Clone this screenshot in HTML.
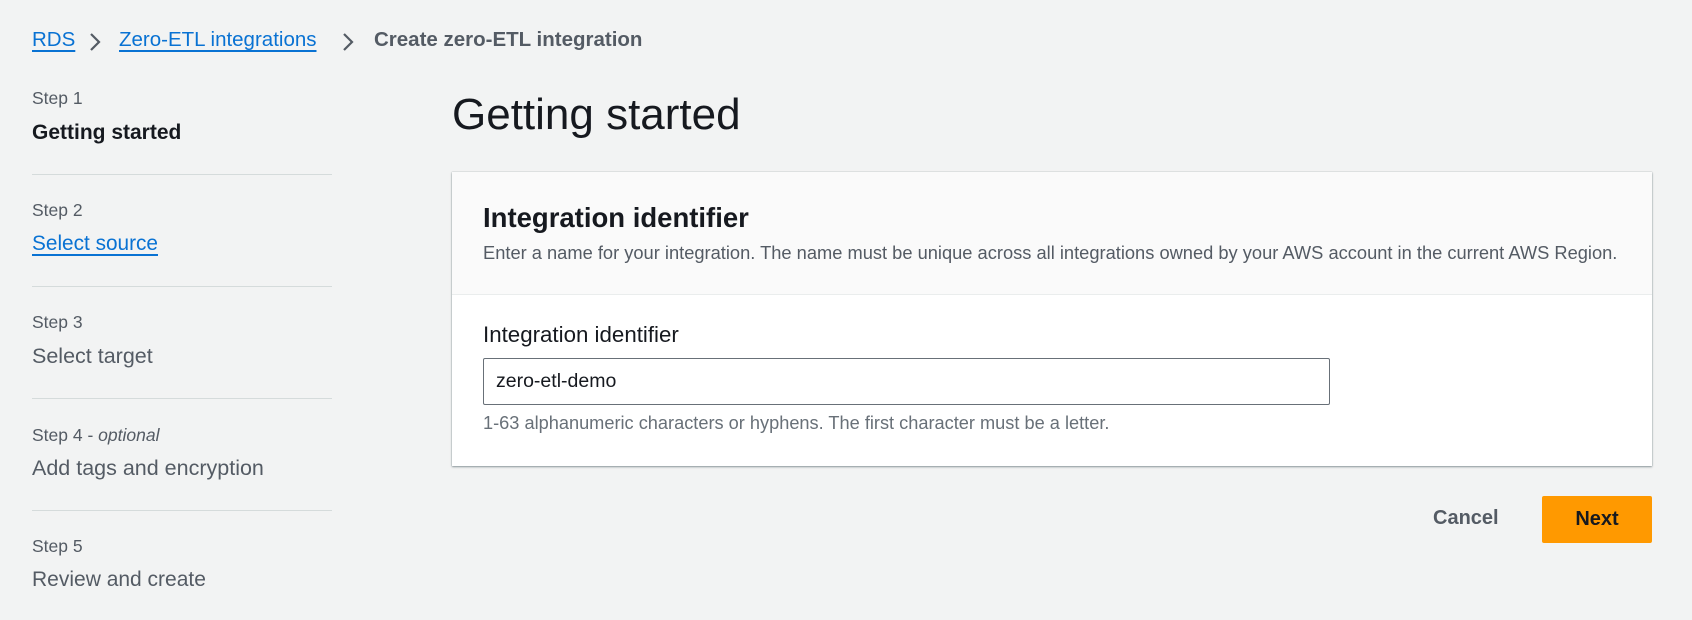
<!DOCTYPE html>
<html><head><meta charset="utf-8"><style>
*{margin:0;padding:0;box-sizing:border-box}
body{width:1692px;height:620px;background:#f2f3f3;font-family:"Liberation Sans",sans-serif;position:relative;overflow:hidden;color:#16191f}
.a{position:absolute;white-space:nowrap}
.bc{font-size:20.5px;top:28px}
.stp{font-size:17.5px;color:#545b64;left:32px}
.nav{font-size:21.5px;color:#545b64;left:32px}
.lnk{color:#0972d3 !important;text-decoration:underline;text-underline-offset:4px;text-decoration-thickness:2px}
.div{position:absolute;left:32px;width:300px;height:1px;background:#d5dbdb}
</style></head><body>
<div class="a bc lnk" style="left:32px">RDS</div>
<svg class="a" style="left:88px;top:31px" width="14" height="22" viewBox="0 0 14 22"><path d="M3 3l8 8-8 8" fill="none" stroke="#545b64" stroke-width="2.2"/></svg>
<div class="a bc lnk" style="left:119px">Zero-ETL integrations</div>
<svg class="a" style="left:341px;top:31px" width="14" height="22" viewBox="0 0 14 22"><path d="M3 3l8 8-8 8" fill="none" stroke="#545b64" stroke-width="2.2"/></svg>
<div class="a bc" style="left:374px;color:#545b64;font-weight:bold">Create zero-ETL integration</div>

<div class="a stp" style="top:88px">Step 1</div>
<div class="a nav" style="top:121px;color:#16191f;font-weight:bold;font-size:21px">Getting started</div>
<div class="div" style="top:174px"></div>
<div class="a stp" style="top:200px">Step 2</div>
<div class="a nav lnk" style="top:232px;font-size:20.8px">Select source</div>
<div class="div" style="top:286px"></div>
<div class="a stp" style="top:312px">Step 3</div>
<div class="a nav" style="top:344px">Select target</div>
<div class="div" style="top:398px"></div>
<div class="a stp" style="top:425px">Step 4 - <i>optional</i></div>
<div class="a nav" style="top:456px">Add tags and encryption</div>
<div class="div" style="top:510px"></div>
<div class="a stp" style="top:536px">Step 5</div>
<div class="a nav" style="top:568px;font-size:21px">Review and create</div>

<div class="a" style="left:452px;top:90px;font-size:44px;color:#16191f">Getting started</div>

<div class="a" style="left:452px;top:172px;width:1200px;height:294px;background:#fff;box-shadow:0 1px 2px rgba(0,28,36,.4),0 0 1px rgba(0,28,36,.3)">
 <div style="height:123px;background:#fafafa;border-bottom:1px solid #eaeded"></div>
</div>
<div class="a" style="left:483px;top:202px;font-size:27.5px;font-weight:bold">Integration identifier</div>
<div class="a" style="left:483px;top:242px;font-size:18.3px;color:#545b64">Enter a name for your integration. The name must be unique across all integrations owned by your AWS account in the current AWS Region.</div>
<div class="a" style="left:483px;top:322px;font-size:22.3px">Integration identifier</div>
<div class="a" style="left:483px;top:358px;width:847px;height:47px;border:1px solid #687078;border-radius:2px;background:#fff;padding:11px 12px;font-size:19.5px">zero-etl-demo</div>
<div class="a" style="left:483px;top:413px;font-size:18.2px;color:#687078">1-63 alphanumeric characters or hyphens. The first character must be a letter.</div>

<div class="a" style="left:1433px;top:507px;font-size:20px;font-weight:bold;color:#545b64">Cancel</div>
<div class="a" style="left:1542px;top:496px;width:110px;height:47px;background:#ff9900;border-radius:2px;font-size:20px;font-weight:bold;color:#16191f;text-align:center;line-height:47px">Next</div>
</body></html>
